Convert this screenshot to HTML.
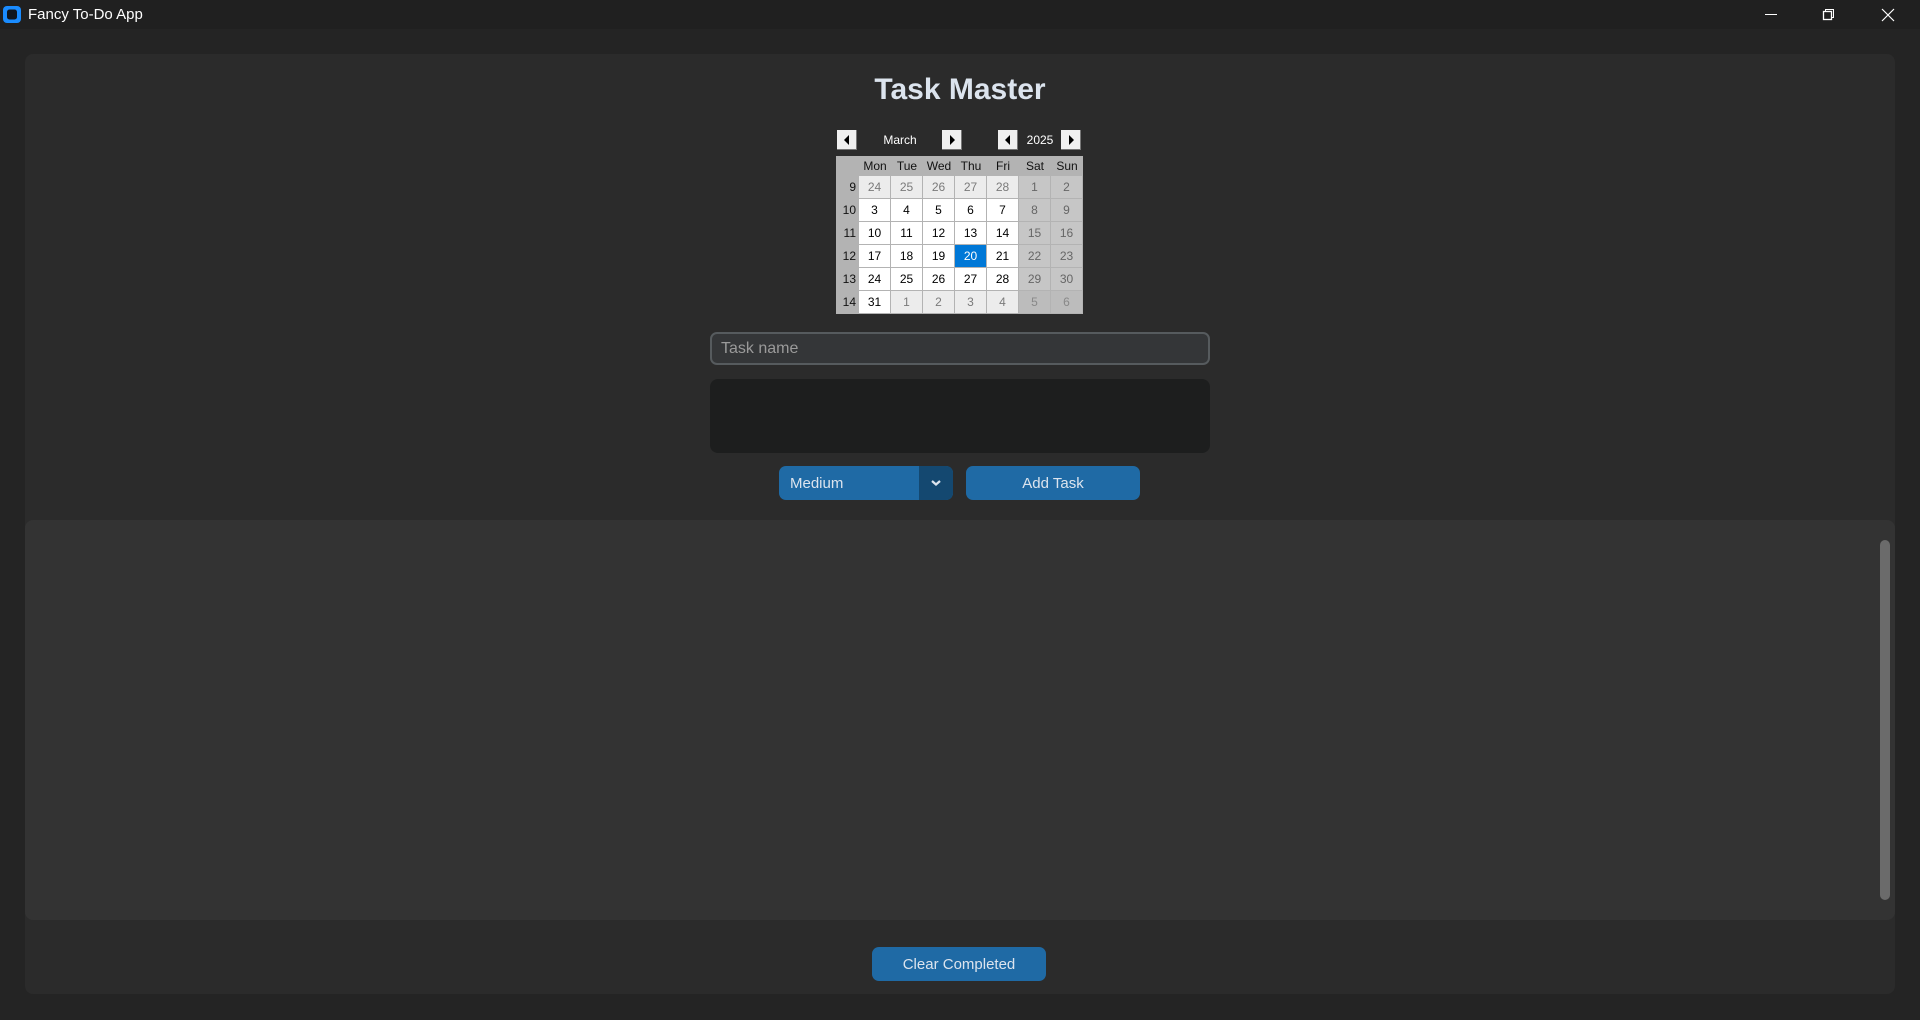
<!DOCTYPE html>
<html><head><meta charset="utf-8"><style>
*{margin:0;padding:0;box-sizing:border-box}
body{width:1920px;height:1020px;background:#242424;position:relative;overflow:hidden;font-family:"Liberation Sans",sans-serif}
.abs{position:absolute}
#tb{left:0;top:0;width:1920px;height:29px;background:#202020}
#main{left:25px;top:54px;width:1870px;height:940px;background:#2b2b2b;border-radius:8px}
#list{left:25px;top:520px;width:1870px;height:400px;background:#333333;border-radius:8px}
.btn{background:#1f6aa5;color:#dce4ee;border-radius:7px;font-size:15px;display:flex;align-items:center;justify-content:center}
.cal{left:836px;top:156px;width:247px;height:158px;background:#b3b3b3}
.cell{position:absolute;display:flex;align-items:center;justify-content:center;font-size:12px;font-family:"Liberation Sans",sans-serif}
.nb{position:absolute;top:130px;width:20px;height:20px;background:#f0f0f0;border-right:1px solid #777;border-bottom:1px solid #777}
.nb svg{position:absolute;left:6px;top:5px}
</style></head><body>
<div class="abs" id="tb"></div>
<svg class="abs" style="left:2px;top:5px" width="20" height="19" viewBox="0 0 20 19"><rect x="1" y="1" width="18" height="17" rx="4" fill="#1a8cff"/><rect x="5" y="4.5" width="10" height="10" rx="2.5" fill="#10161e"/></svg>
<div class="abs" style="left:28px;top:6px;color:#fff;font-size:15px">Fancy To-Do App</div>
<svg class="abs" style="left:1760px;top:8px" width="140" height="14" viewBox="0 0 140 14">
<line x1="5" y1="6.5" x2="17" y2="6.5" stroke="#fff" stroke-width="1"/>
<rect x="63.5" y="3.5" width="8" height="8" fill="none" stroke="#fff" stroke-width="1.3"/><path d="M65.5 3.5V1.5H73.5V9.5H71.5" fill="none" stroke="#fff" stroke-width="1"/>
<path d="M122 1L134 13M134 1L122 13" stroke="#fff" stroke-width="1.2"/>
</svg>
<div class="abs" id="main"></div>
<div class="abs" style="left:0;top:73px;width:1920px;text-align:center;color:#dce4ee;font-size:30px;font-weight:bold">Task Master</div>

<div class="nb" style="left:837px"><svg width="8" height="10"><path d="M6 0V10L1 5Z" fill="#000"/></svg></div>
<div class="abs" style="left:862px;top:133px;width:76px;text-align:center;color:#fff;font-size:12px">March</div>
<div class="nb" style="left:942px"><svg width="8" height="10"><path d="M2 0V10L7 5Z" fill="#000"/></svg></div>
<div class="nb" style="left:998px"><svg width="8" height="10"><path d="M6 0V10L1 5Z" fill="#000"/></svg></div>
<div class="abs" style="left:1019px;top:133px;width:42px;text-align:center;color:#fff;font-size:12px">2025</div>
<div class="nb" style="left:1061px"><svg width="8" height="10"><path d="M2 0V10L7 5Z" fill="#000"/></svg></div>

<div class="abs cal" id="cal"></div>

<div class="abs" style="left:710px;top:332px;width:500px;height:33px;background:#343638;border:2px solid #565b5e;border-radius:7px;color:#9a9a9a;font-size:16px;padding:6px 9px">Task name</div>
<div class="abs" style="left:710px;top:379px;width:500px;height:74px;background:#1d1e1e;border-radius:8px"></div>
<div class="abs btn" style="left:779px;top:466px;width:174px;height:34px;justify-content:flex-start;padding-left:11px;overflow:hidden">Medium<div style="position:absolute;right:0;top:0;width:34px;height:34px;background:#144870"><svg style="position:absolute;left:12px;top:14px" width="10" height="6"><path d="M1 1L5 4.5L9 1" fill="none" stroke="#dce4ee" stroke-width="2.2"/></svg></div></div>
<div class="abs btn" style="left:966px;top:466px;width:174px;height:34px">Add Task</div>
<div class="abs" id="list"></div>
<div class="abs" style="left:1880px;top:540px;width:10px;height:360px;background:#6b6b6b;border-radius:5px"></div>
<div class="abs btn" style="left:872px;top:947px;width:174px;height:34px">Clear Completed</div>
<script>
var cal=document.getElementById('cal'),h='';
var cw=32,x0=23;
var days=['Mon','Tue','Wed','Thu','Fri','Sat','Sun'];
for(var i=0;i<7;i++)h+='<div class="cell" style="left:'+(x0+i*cw)+'px;top:0;width:'+cw+'px;height:20px;color:#111">'+days[i]+'</div>';
var rows=[[9,[24,25,26,27,28,1,2]],[10,[3,4,5,6,7,8,9]],[11,[10,11,12,13,14,15,16]],[12,[17,18,19,20,21,22,23]],[13,[24,25,26,27,28,29,30]],[14,[31,1,2,3,4,5,6]]];
for(var r=0;r<6;r++){var y=20+r*23;
h+='<div class="cell" style="left:0;top:'+y+'px;width:'+x0+'px;height:22px;color:#111;justify-content:flex-end;padding-right:3px">'+rows[r][0]+'</div>';
for(var c=0;c<7;c++){var other=(r==0&&c<5)||(r==5&&c>0);var we=c>=5;
var bg=we?'#c6c6c6':(other?'#ececec':'#fff');var col=other?'#7a7a7a':(we?'#666':'#000');
if(r==0&&c>=5){bg='#c6c6c6';col='#666'}
if(r==5&&c>=5){bg='#bcbcbc';col='#888'}
if(r==3&&c==3){bg='#0078d7';col='#fff'}
h+='<div class="cell" style="left:'+(x0+c*cw)+'px;top:'+y+'px;width:'+(cw-1)+'px;height:22px;background:'+bg+';color:'+col+'">'+rows[r][1][c]+'</div>';}}
cal.innerHTML=h;
</script>
</body></html>
